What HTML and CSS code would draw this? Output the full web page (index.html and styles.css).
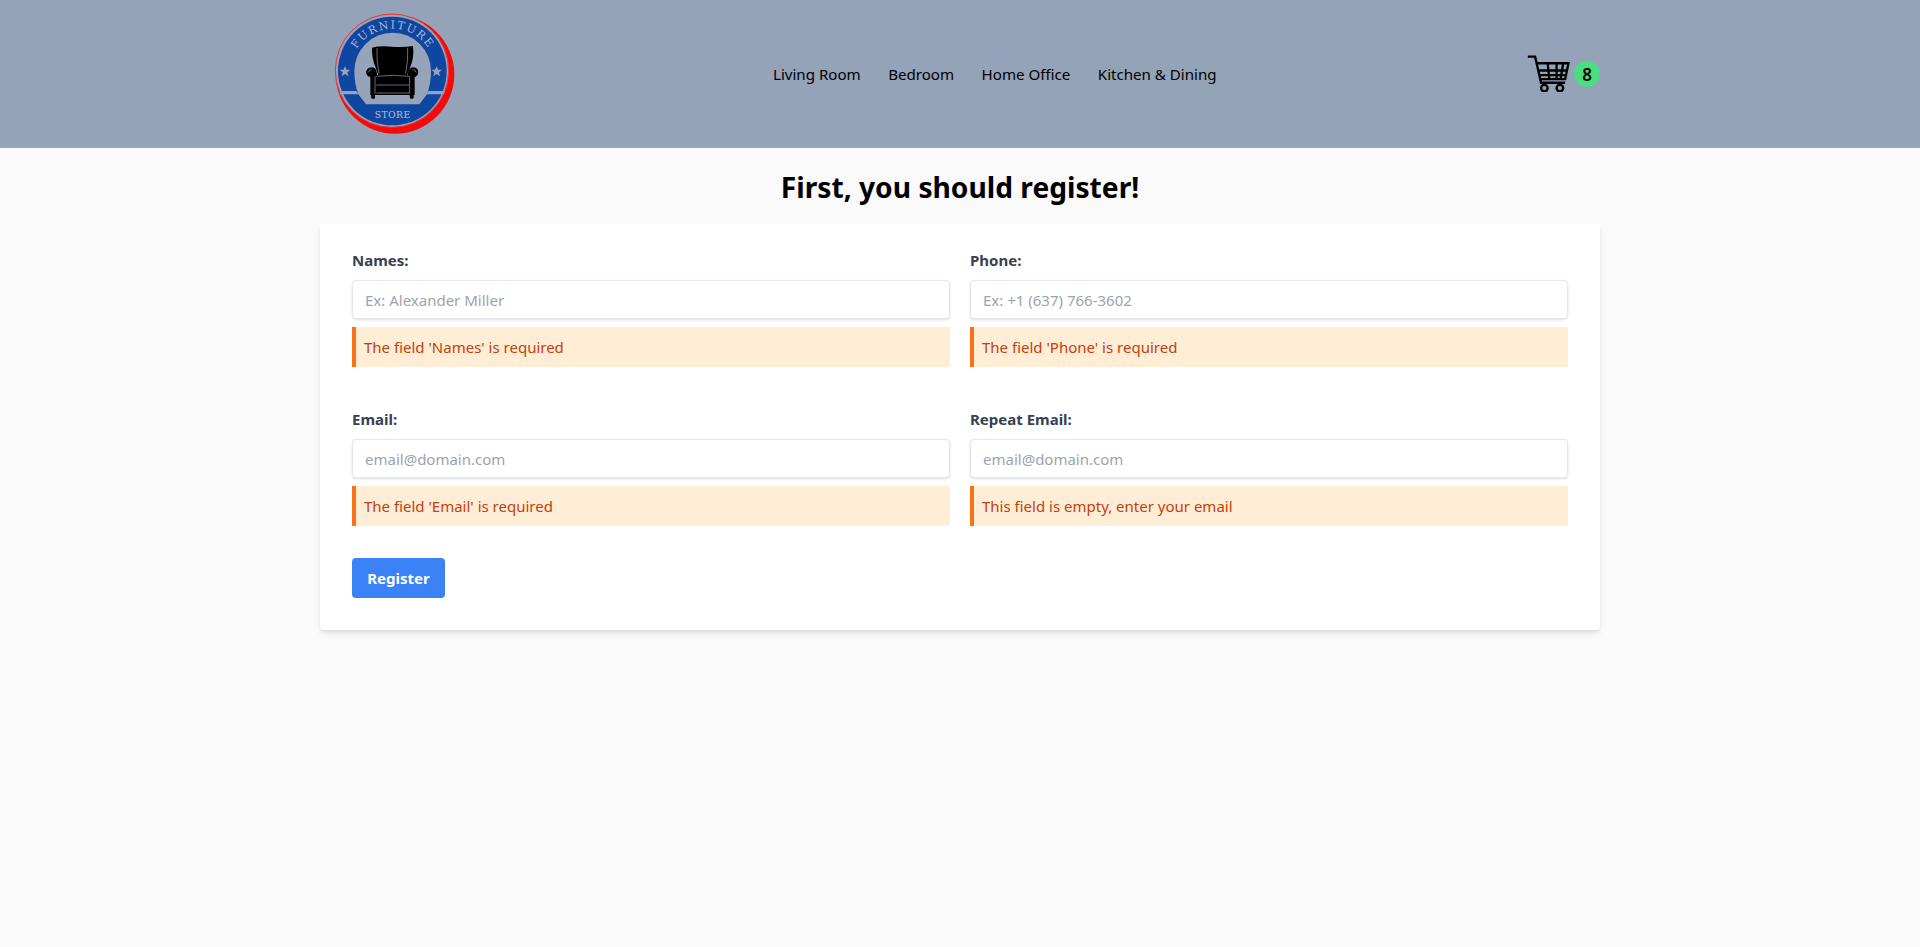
FILE: index.html
```html
<!DOCTYPE html>
<html lang="en">
<head>
<meta charset="utf-8">
<title>Furniture Store</title>
<link rel="stylesheet" href="styles.css">
</head>
<body>
<header class="site-header">
  <div class="header-inner">
    <a class="logo" href="#">
      <svg width="130" height="130" viewBox="30 30 390 390">
        <defs><path id="arc" d="M88 210 A127 127 0 0 1 342 210"/></defs>
        <circle cx="222" cy="220" r="178" fill="#f40a0a"/>
        <circle cx="213" cy="209" r="170" fill="#96a4ba" stroke="#f23030" stroke-width="3"/>
        <circle cx="214" cy="210" r="163" fill="#0f46a0"/>
        <path d="M100 210 A115 115 0 0 1 330 210 Q330 248 318 280 L295 310 H135 L112 280 Q100 248 100 210Z" fill="#96a4ba"/>
        <path d="M58 270 H106 L112 280 H56Z M322 270 H372 L368 280 H316Z" fill="#8fa3c8"/>
        <text class="logo-top"><textPath href="#arc" startOffset="50%" text-anchor="middle">FURNITURE</textPath></text>
        <text class="logo-bottom" x="215" y="351" text-anchor="middle">STORE</text>
        <path class="logo-star" d="M72 196l4.500 10.500h11.500l-9 7.500 3 12-10-7-10 7 3-12-9-7.500h11.500z"/>
        <path class="logo-star" d="M347 196l4.500 10.500h11.500l-9 7.500 3 12-10-7-10 7 3-12-9-7.500h11.500z"/>
        <g fill="#000">
          <path d="M153 140 Q180 133 212 137 Q245 140 276 135 Q280 170 268 198 L258 222 H172 L164 200 Q152 170 153 140Z"/>
          <path d="M135 214 Q137 200 152 199 Q168 200 168 222 H260 Q262 199 277 199 Q292 201 292 214 Q290 226 281 228 V282 H148 V228 Q137 226 135 214Z"/>
          <path d="M150 282 H162 V292 Q156 295 151 292Z M266 282 H278 V292 Q272 295 267 292Z"/>
        </g>
        <path d="M168 142 Q166 175 174 218 M260 140 Q262 175 254 218 M166 226 Q215 220 264 226 M166 252 H264 M166 276 H264 M162 226 V278 M266 226 V278 M142 214 Q144 206 152 206 M285 214 Q283 206 275 206" fill="none" stroke="#96a4ba" stroke-width="2"/>
      </svg>
    </a>
    <nav class="main-nav">
      <a href="#">Living Room</a>
      <a href="#">Bedroom</a>
      <a href="#">Home Office</a>
      <a href="#">Kitchen &amp; Dining</a>
    </nav>
    <a class="cart" href="#">
      <svg class="cart-icon" width="45" height="38" viewBox="80 40 135 115">
        <path d="M85 48H107L125 127H198M111 68H208L198 116H121M145 68L150 116M172 68V116M192 68L184 116M115 90H204M118 104H201" fill="none" stroke="#000" stroke-width="7"/>
        <circle cx="135" cy="143" r="10" fill="none" stroke="#000" stroke-width="7"/>
        <circle cx="182" cy="143" r="10" fill="none" stroke="#000" stroke-width="7"/>
      </svg>
      <span class="cart-badge">8</span>
    </a>
  </div>
</header>
<main class="page">
  <h1 class="page-title">First, you should register!</h1>
  <form class="card">
    <div class="form-grid">
      <div class="field">
        <label class="field-label">Names:</label>
        <input class="field-input" type="text" placeholder="Ex: Alexander Miller">
        <p class="field-error">The field 'Names' is required</p>
      </div>
      <div class="field">
        <label class="field-label">Phone:</label>
        <input class="field-input" type="text" placeholder="Ex: +1 (637) 766-3602">
        <p class="field-error">The field 'Phone' is required</p>
      </div>
      <div class="field">
        <label class="field-label">Email:</label>
        <input class="field-input" type="text" placeholder="email@domain.com">
        <p class="field-error">The field 'Email' is required</p>
      </div>
      <div class="field">
        <label class="field-label">Repeat Email:</label>
        <input class="field-input" type="text" placeholder="email@domain.com">
        <p class="field-error">This field is empty, enter your email</p>
      </div>
    </div>
    <button class="submit" type="button">Register</button>
  </form>
</main>
</body>
</html>
```
FILE: styles.css
```css
* { box-sizing: border-box; }
html, body { margin: 0; padding: 0; }
body {
  min-height: 947px;
  background: #fafafa;
  color: #000;
  font-family: "Noto Sans", "Open Sans", sans-serif;
  font-size: 16px;
}
a { color: inherit; text-decoration: none; }
.site-header { background: #94a3b8; height: 148px; }
.header-inner {
  width: 1280px;
  height: 148px;
  margin: 0 auto;
  display: flex;
  align-items: center;
}
.logo { display: block; width: 130px; height: 130px; margin-left: 11px; margin-top: 4px; }
.logo-top { font-family: "DejaVu Serif", serif; font-size: 33px; letter-spacing: 5px; fill: #a8bcdf; }
.logo-bottom { font-family: "DejaVu Serif", serif; font-size: 28px; letter-spacing: 1px; fill: #b4c4de; }
.logo-star { fill: #96a4ba; }
.main-nav { display: flex; gap: 27.500px; font-size: 15.100px; margin-left: 312px; }
.cart { display: flex; align-items: center; gap: 3px; margin-left: auto; }
.cart-icon { margin-top: -3px; }
.cart-badge {
  width: 26px; height: 26px; border-radius: 50%;
  background: #4ade80;
  display: flex; align-items: center; justify-content: center;
  font-weight: 600; font-size: 17px;
}
.page { width: 1280px; margin: 0 auto; }
.page-title { margin: 0; padding-top: 19px; height: 76px; text-align: center; font-size: 28.200px; line-height: 40px; font-weight: 700; }
.card {
  background: #fff;
  border-radius: 4px;
  box-shadow: 0 4px 6px -1px rgba(0,0,0,.1), 0 2px 4px -2px rgba(0,0,0,.1);
  padding: 26px 32px 32px;
}
.form-grid { display: grid; grid-template-columns: 598px 598px; column-gap: 20px; row-gap: 42px; }
.field { display: flex; flex-direction: column; }
.field-label { font-size: 15px; font-weight: 700; color: #374151; line-height: 20px; margin-bottom: 10px; }
.field-input {
  height: 39px;
  width: 100%;
  border: 1px solid #e5e7eb;
  border-radius: 4px;
  box-shadow: 0 1px 3px 0 rgba(0,0,0,.1), 0 1px 2px -1px rgba(0,0,0,.1);
  padding: 0 12px;
  font: inherit;
  font-size: 15px;
  color: #374151;
  background: #fff;
}
.field-input::placeholder { color: #9ca3af; opacity: 1; }
.field-error {
  margin: 8px 0 0;
  height: 40px;
  background: #ffedd5;
  border-left: 4px solid #f97316;
  padding-left: 8px;
  line-height: 40px;
  font-size: 15px;
  color: #c2410c;
}
.submit {
  display: block;
  margin-top: 32px;
  width: 93px;
  height: 40px;
  border: 0;
  border-radius: 4px;
  background: #3b82f6;
  color: #fff;
  font: inherit;
  font-size: 15px;
  font-weight: 700;
}
```
